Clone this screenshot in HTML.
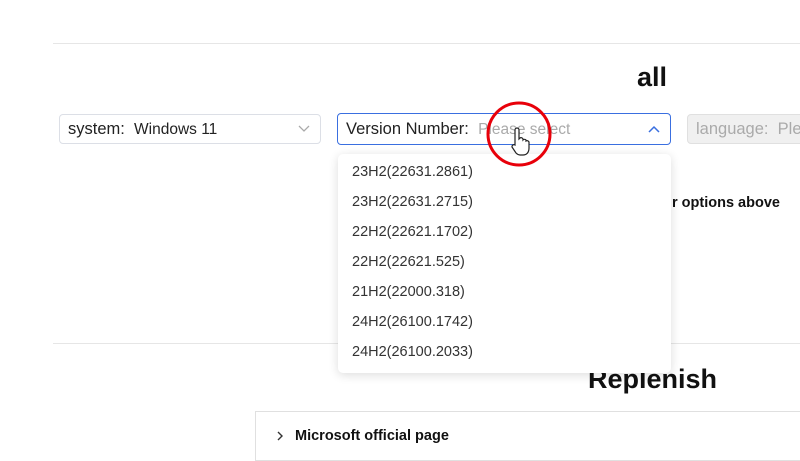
<!DOCTYPE html>
<html><head><style>
body{margin:0;width:800px;height:450px;overflow:hidden;background:#fff;font-family:"Liberation Sans","DejaVu Sans",sans-serif;position:relative;color:#222}
.a{position:absolute}
.sel{position:absolute;height:30px;border:1px solid #dcdfe6;border-radius:4px;box-sizing:border-box;font-size:16.5px;line-height:28px;padding-left:8px;white-space:nowrap;overflow:hidden}
.item{position:absolute;left:14px;font-size:14.5px;color:#333}
</style></head><body>
<div class="a" style="left:53px;top:43px;width:747px;height:1px;background:#e6e6e6"></div>
<div class="a" style="left:53px;top:343px;width:747px;height:1px;background:#e6e6e6"></div>
<div class="a" style="left:637px;top:62px;font-size:27px;font-weight:bold;color:#111">all</div>
<div class="sel" style="left:59px;top:114px;width:262px;color:#222">system:&nbsp; <span style="font-size:15.5px">Windows 11</span>
<svg class="a" style="left:238px;top:10px" width="12" height="8"><path d="M1 1l5 5 5-5" stroke="#aaa" fill="none" stroke-width="1.3"/></svg></div>
<div class="sel" style="left:337px;top:113px;width:334px;height:32px;border-color:#3a6fe0;line-height:30px;color:#222">Version Number:&nbsp; <span style="font-size:15.5px;color:#aaa">Please select</span>
<svg class="a" style="left:310px;top:11px" width="12" height="8"><path d="M1 7l5-5 5 5" stroke="#3a6fe0" fill="none" stroke-width="1.5"/></svg></div>
<div class="sel" style="left:687px;top:114px;width:130px;background:#f0f0f0;border-color:#e0e0e0;color:#aaa">language:&nbsp; Please</div>
<div class="a" style="left:672px;top:195px;font-size:14.5px;font-weight:bold;color:#111">r options above</div>
<div class="a" style="left:588px;top:364px;font-size:27px;font-weight:bold;color:#111">Replenish</div>
<div class="a" style="left:255px;top:411px;width:560px;height:50px;border:1px solid #e0e0e0;box-sizing:border-box"></div>
<svg class="a" style="left:276px;top:430px" width="8" height="12"><path d="M2 2l4 4-4 4" stroke="#333" fill="none" stroke-width="1.4"/></svg>
<div class="a" style="left:295px;top:428px;font-size:14.5px;font-weight:bold;color:#111">Microsoft official page</div>
<div class="a" style="left:338px;top:154px;width:333px;height:219px;background:#fff;border-radius:5px;box-shadow:0 2px 10px rgba(0,0,0,.14)">
<div class="item" style="top:10px">23H2(22631.2861)</div>
<div class="item" style="top:40px">23H2(22631.2715)</div>
<div class="item" style="top:70px">22H2(22621.1702)</div>
<div class="item" style="top:100px">22H2(22621.525)</div>
<div class="item" style="top:130px">21H2(22000.318)</div>
<div class="item" style="top:160px">24H2(26100.1742)</div>
<div class="item" style="top:190px">24H2(26100.2033)</div>
</div>
<svg class="a" style="left:484px;top:100px" width="72" height="72"><circle cx="35" cy="34" r="31" stroke="#e8000a" stroke-width="3" fill="none"/>
<g transform="translate(0,8)"><path d="M31 34v-12a2 2 0 0 1 4 0v9l1-1a2 2 0 0 1 3 1v1a2 2 0 0 1 3 0v1a2 2 0 0 1 3 1v6c0 4-2 7-6 7h-3c-2 0-3-1-4-2l-4-6a2 2 0 0 1 3-2z" fill="#fff" stroke="#222" stroke-width="1.2"/></g></svg>
</body></html>
